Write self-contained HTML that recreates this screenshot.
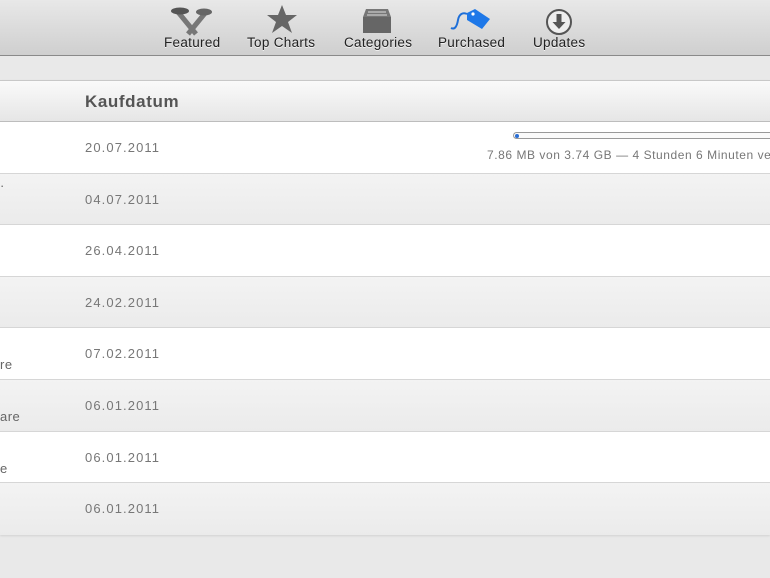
<!DOCTYPE html>
<html><head><meta charset="utf-8"><style>
*{margin:0;padding:0;box-sizing:border-box}
body{width:770px;height:578px;overflow:hidden;background:#e9e9e9;font-family:"Liberation Sans",sans-serif;position:relative}
.tb{position:absolute;left:0;top:0;width:770px;height:56px;background:linear-gradient(#e8e8e8,#cfcfcf);border-bottom:1px solid #8a8a8a}
.it{position:absolute;top:35px;font-size:13.5px;letter-spacing:.3px;color:#222;text-shadow:0 1px 0 #f2f2f2;white-space:nowrap}
.ic{position:absolute;top:4px}
.tbl{position:absolute;left:0;top:80px;width:770px;height:455px;border-top:1px solid #c8c8c8;border-bottom:1px solid #b0b0b0;box-shadow:0 1px 2px rgba(0,0,0,.1)}
.hd{height:41px;background:linear-gradient(#fafafa,#e6e6e6);border-bottom:1px solid #bdbdbd;position:relative}
.hd span{position:absolute;left:85px;top:11px;font-size:17px;letter-spacing:.6px;font-weight:bold;color:#555}
.r{height:51.6px;position:relative;border-bottom:1px solid #d6d6d6;background:#fff}
.r:nth-child(odd){background:linear-gradient(#f3f3f3,#ebebeb)}
.d{position:absolute;left:85px;top:18px;font-size:13px;color:#777;letter-spacing:1.1px}
.l{position:absolute;left:0;top:29px;font-size:13px;letter-spacing:.5px;color:#666}
</style></head><body>
<div class="tb">
<svg class="ic" style="left:170px" width="44" height="32" viewBox="0 0 44 32"><path d="M8 8 L26 30 M36 8 L18 30" stroke="#777" stroke-width="5"/><ellipse cx="10" cy="7" rx="9" ry="3.5" fill="#555"/><ellipse cx="34" cy="8" rx="8" ry="3.5" fill="#666"/></svg>
<div class="it" style="left:164px">Featured</div>
<svg class="ic" style="left:266px" width="32" height="30" viewBox="0 0 32 30"><path d="M16 1 L20 11 L31 11 L22 18 L26 29 L16 22 L6 29 L10 18 L1 11 L12 11Z" fill="#666"/></svg>
<div class="it" style="left:247px">Top Charts</div>
<svg class="ic" style="left:362px;top:8px" width="30" height="26" viewBox="0 0 30 26"><path d="M4 1h22l3 8H1z" fill="#777"/><rect x="1" y="9" width="28" height="16" fill="#666"/><path d="M6 4h18M5 7h20" stroke="#ddd"/></svg>
<div class="it" style="left:344px">Categories</div>
<svg class="ic" style="left:449px;top:8px" width="44" height="26" viewBox="0 0 44 26"><path d="M2 20 C6 22 8 18 9 12 C10 6 14 4 18 6" stroke="#1e6fd8" stroke-width="2" fill="none"/><path d="M18 5 L26 1 L41 11 L33 21 L18 12Z" fill="#1e78e8"/><circle cx="24" cy="6" r="1.6" fill="#fff"/></svg>
<div class="it" style="left:438px">Purchased</div>
<svg class="ic" style="left:545px;top:8px" width="28" height="28" viewBox="0 0 28 28"><circle cx="14" cy="14" r="12" fill="#eee" stroke="#555" stroke-width="2"/><path d="M11.5 6h5v8h4l-6.5 7-6.5-7h4z" fill="#555"/></svg>
<div class="it" style="left:533px">Updates</div>
</div>
<div class="tbl">
<div class="hd"><span>Kaufdatum</span></div>
<div class="r"><div class="d">20.07.2011</div>
<div style="position:absolute;left:513px;top:10px;width:260px;height:7px;border:1px solid #999;border-right:none;border-radius:4px 0 0 4px;background:#fafafa"><div style="position:absolute;left:1px;top:1px;width:4px;height:4px;border-radius:50%;background:#2a6fd6"></div></div>
<div style="position:absolute;left:487px;top:26px;font-size:12px;letter-spacing:.55px;color:#777;white-space:nowrap">7.86 MB von 3.74 GB — 4 Stunden 6 Minuten ve</div></div>
<div class="r"><div class="d">04.07.2011</div><div class="l" style="top:4px">·</div></div>
<div class="r"><div class="d">26.04.2011</div></div>
<div class="r"><div class="d">24.02.2011</div></div>
<div class="r"><div class="d">07.02.2011</div><div class="l">re</div></div>
<div class="r"><div class="d">06.01.2011</div><div class="l">are</div></div>
<div class="r"><div class="d">06.01.2011</div><div class="l">e</div></div>
<div class="r" style="border-bottom:none"><div class="d">06.01.2011</div></div>
</div>
</body></html>
